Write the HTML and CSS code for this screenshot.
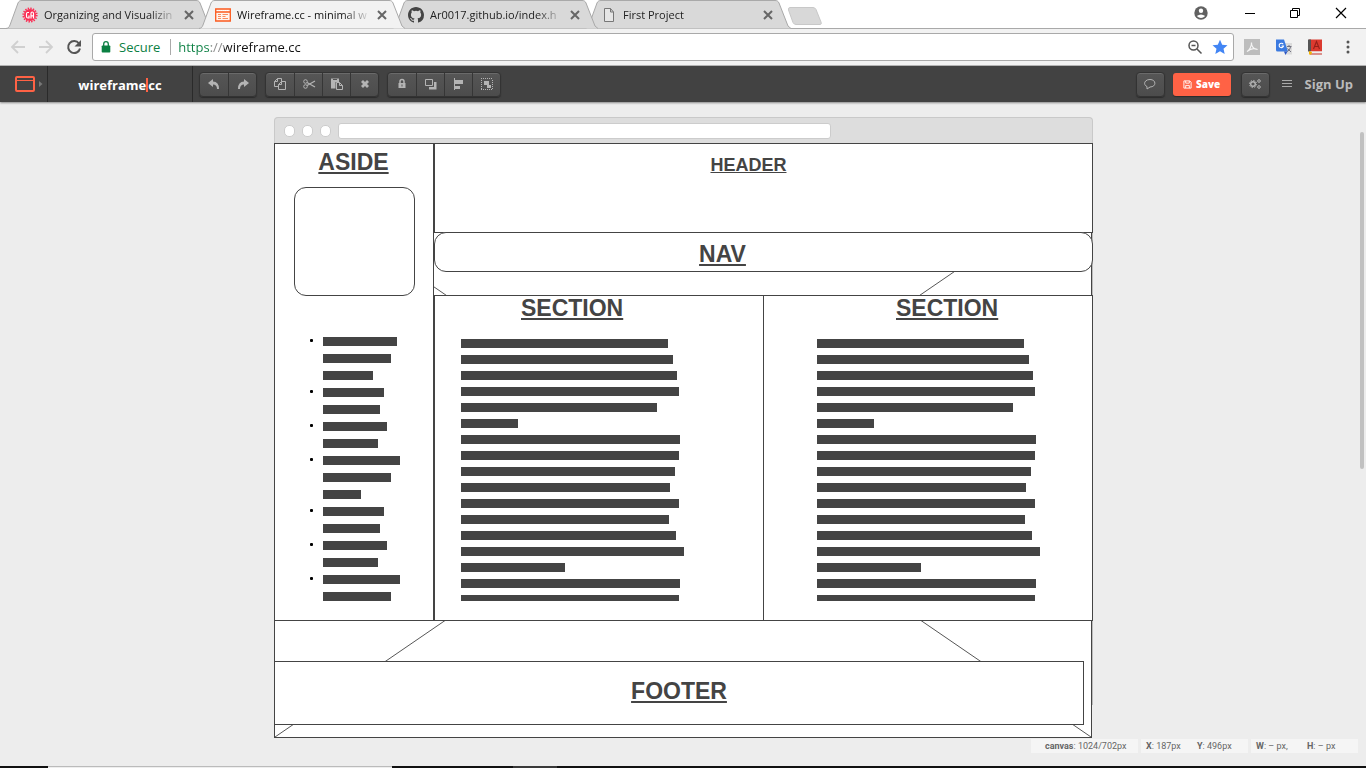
FILE: index.html
```html
<!DOCTYPE html>
<html lang="en">
<head>
<meta charset="utf-8">
<title>Wireframe.cc - minimal wireframing tool</title>
<link rel="stylesheet" href="styles.css">
</head>
<body>
<div class="tabstrip">
  <div class="tabs">
    <div class="tab">
      <svg class="tab-shape" viewBox="0 0 206 29" preserveAspectRatio="none"><path d="M0 28.5C3 28 3 27 4 25L12 3C13 1 14 .5 16 .5H190C192 .5 193 1 194 3L203 26L206 28.5"/></svg>
      <svg class="favicon" viewBox="0 0 16 16"><circle cx="8" cy="8" r="6" fill="#fb2e54"/><circle cx="8" cy="8" r="6.6" fill="none" stroke="#fb2e54" stroke-width="2" stroke-dasharray="1.4 1.2"/><path d="M7 5.500H5.500Q4.500 5.500 4.500 7v2.500Q4.500 11 6 11H7V8.500M9 11.500V6.500Q9 5 10.200 5t1.300 1.500v5M9 8.800h2.500" fill="none" stroke="#fff" stroke-width="1.200"/></svg>
      <span class="tab-title">Organizing and Visualizin</span>
      <button class="tab-close" aria-label="Close tab"><svg viewBox="0 0 10 10"><path d="M1 1l8 8M9 1L1 9"/></svg></button>
    </div>
    <div class="tab active">
      <svg class="tab-shape" viewBox="0 0 206 29" preserveAspectRatio="none"><path d="M0 28.5C3 28 3 27 4 25L12 3C13 1 14 .5 16 .5H190C192 .5 193 1 194 3L203 26L206 28.5"/></svg>
      <svg class="favicon" viewBox="0 0 16 16"><path d="M.7 2h14.600v12H.7zM.7 5h14.600" fill="#fff4ee" stroke="#fb5a1e" stroke-width="1.300"/><path d="M2 3.500h12" stroke="#fff" stroke-dasharray="1 1"/><path d="M3 7.500h3M7.500 7.500h5.500M3 9.500h3M7.500 9.500h3M3 11.500h3M7.500 11.500h5.500" stroke="#fb8a5a" stroke-width="1"/></svg>
      <span class="tab-title">Wireframe.cc - minimal w</span>
      <button class="tab-close" aria-label="Close tab"><svg viewBox="0 0 10 10"><path d="M1 1l8 8M9 1L1 9"/></svg></button>
    </div>
    <div class="tab">
      <svg class="tab-shape" viewBox="0 0 206 29" preserveAspectRatio="none"><path d="M0 28.5C3 28 3 27 4 25L12 3C13 1 14 .5 16 .5H190C192 .5 193 1 194 3L203 26L206 28.5"/></svg>
      <svg class="favicon" viewBox="0 0 16 16"><path fill="#444" d="M8 0C3.580 0 0 3.580 0 8c0 3.540 2.290 6.530 5.470 7.590.4.070.55-.17.55-.38 0-.19-.01-.82-.01-1.490-2.010.37-2.530-.49-2.690-.94-.09-.23-.48-.94-.82-1.130-.28-.15-.68-.52-.01-.53.63-.01 1.080.58 1.230.82.72 1.210 1.870.87 2.330.66.070-.52.28-.87.51-1.070-1.780-.2-3.640-.89-3.640-3.950 0-.87.31-1.590.82-2.150-.08-.2-.36-1.020.08-2.120 0 0 .67-.21 2.200.82a7.600 7.600 0 0 1 4 0c1.530-1.040 2.200-.82 2.200-.82.44 1.100.16 1.920.08 2.120.51.56.82 1.270.82 2.150 0 3.070-1.870 3.750-3.650 3.950.29.25.54.73.54 1.480 0 1.070-.01 1.930-.01 2.200 0 .21.15.46.55.38A8.010 8.010 0 0 0 16 8c0-4.420-3.580-8-8-8z"/></svg>
      <span class="tab-title">Ar0017.github.io/index.h</span>
      <button class="tab-close" aria-label="Close tab"><svg viewBox="0 0 10 10"><path d="M1 1l8 8M9 1L1 9"/></svg></button>
    </div>
    <div class="tab">
      <svg class="tab-shape" viewBox="0 0 206 29" preserveAspectRatio="none"><path d="M0 28.5C3 28 3 27 4 25L12 3C13 1 14 .5 16 .5H190C192 .5 193 1 194 3L203 26L206 28.5"/></svg>
      <svg class="favicon" viewBox="0 0 16 16"><path d="M3.500 1.500h6l3 3.500v9.500h-9zM9.500 1.500V5h3" fill="#e6e6e6" stroke="#777"/></svg>
      <span class="tab-title">First Project</span>
      <button class="tab-close" aria-label="Close tab"><svg viewBox="0 0 10 10"><path d="M1 1l8 8M9 1L1 9"/></svg></button>
    </div>
    <button class="new-tab" aria-label="New tab"><svg viewBox="0 0 36 18"><path d="M3 .5H26Q28 .5 29 2.500L34 15Q35 17.500 33 17.500H9Q7 17.500 6 15.500L1.500 3Q1 .5 3 .5Z" fill="#d8d8d8" stroke="#c8c8c8"/></svg></button>
  </div>
  <div class="window-buttons">
    <button aria-label="Account"><svg viewBox="0 0 14 14"><circle cx="7" cy="7" r="6.700" fill="#616161"/><circle cx="7" cy="4.800" r="2.200" fill="#fff"/><path d="M2.800 10Q7 6.800 11.200 10Q7 14 2.800 10Z" fill="#fff"/></svg></button>
    <button aria-label="Minimize"><svg viewBox="0 0 14 14"><path d="M3 7.500h10" stroke="#000"/></svg></button>
    <button aria-label="Restore"><svg viewBox="0 0 14 14"><path d="M2.500 4.500h7v7h-7zM4.500 4V2.500h7v7H10" fill="none" stroke="#000"/></svg></button>
    <button aria-label="Close"><svg viewBox="0 0 14 14"><path d="M2 2l10 10M12 2L2 12" stroke="#000" stroke-width="1.200"/></svg></button>
  </div>
</div>

<div class="toolbar">
  <div class="nav-buttons">
    <button aria-label="Back"><svg viewBox="0 0 16 16"><path d="M15 8H2M8 2L2 8l6 6" fill="none" stroke="#d0d0d0" stroke-width="1.800"/></svg></button>
    <button aria-label="Forward"><svg viewBox="0 0 16 16"><path d="M1 8h13M8 2l6 6-6 6" fill="none" stroke="#d0d0d0" stroke-width="1.800"/></svg></button>
    <button aria-label="Reload"><svg viewBox="0 0 16 16"><path d="M13 4.500A6 6 0 1 0 14 9.500" fill="none" stroke="#555" stroke-width="2"/><path d="M15 1v6.500H8.500z" fill="#555"/></svg></button>
  </div>
  <div class="omnibox">
    <svg class="lock" viewBox="0 0 10 14"><path d="M1.500 5.500h7q.8 0 .8.800v5.400q0 .8-.8.800h-7q-.8 0-.8-.8V6.300q0-.8.8-.8z" fill="#0b8043"/><path d="M2.700 6V4a2.300 2.300 0 0 1 4.600 0v2" fill="none" stroke="#0b8043" stroke-width="1.300"/></svg>
    <span class="secure">Secure</span>
    <input class="url" type="text" value="https://wireframe.cc" aria-label="Address">
    <svg class="omni-icon" viewBox="0 0 16 16"><circle cx="6.500" cy="6.500" r="4.500" fill="none" stroke="#555" stroke-width="1.500"/><path d="M4.500 6.500h4M10 10l4.500 4.500" stroke="#555" stroke-width="1.500"/></svg>
    <svg class="omni-icon" viewBox="0 0 16 16"><path fill="#4285f4" d="M8 .8l2.200 4.900 5.300.5-4 3.600 1.200 5.200L8 12.300 3.300 15l1.200-5.200-4-3.600 5.300-.5z"/></svg>
  </div>
  <div class="extensions">
    <button aria-label="PDF"><svg viewBox="0 0 16 16"><path d="M0 0h16v16H0z" fill="#bdbdbd"/><path d="M3 12.500C5 11.500 8 7 7.500 3.500C7 7 10 10.500 13.500 10.500C10 9 6 10 3 12.500Z" fill="none" stroke="#f5f5f5" stroke-width="1.200"/></svg></button>
    <button aria-label="Translate"><svg viewBox="0 0 16 16"><path d="M6 4h10v11.500H9z" fill="#dcdcdc"/><path d="M0 .5h8l4 12H1.500Q0 12.500 0 11z" fill="#3b7ae0"/><path d="M8 12.500h3.500L9.500 16z" fill="#2a56c6"/><path d="M7.200 5.200A2.200 2.200 0 1 0 7.500 7H5.500" fill="none" stroke="#fff" stroke-width="1.100"/><path d="M11 7.500h4.500M13 6v1.500M14.500 8Q14 11 11.500 12.500M11.500 9.500L15 13" fill="none" stroke="#667" stroke-width=".9"/></svg></button>
    <button aria-label="Dictionary"><svg viewBox="0 0 16 16"><path d="M1 .5h13v12H1z" fill="#db3a2f"/><path d="M0 .5h3v12H0z" fill="#555"/><path d="M2 12.500h12v2H2z" fill="#eee"/><path d="M2 15h12" stroke="#c33026"/><path d="M1 12l3 1-1 3-1-1-1 1z" fill="#f4b400"/><path d="M5.500 10l3-7.500 3 7.500M6.500 7.500h4" fill="none" stroke="#962019" stroke-width="1.100"/></svg></button>
    <button aria-label="Menu"><svg viewBox="0 0 16 16"><g fill="#555"><circle cx="8" cy="3" r="1.500"/><circle cx="8" cy="8" r="1.500"/><circle cx="8" cy="13" r="1.500"/></g></svg></button>
  </div>
</div>

<header class="appbar">
  <button class="device" aria-label="Canvas size">
    <svg class="device-icon" viewBox="0 0 20 16"><rect x="1" y="1" width="18" height="14" rx="1" fill="none" stroke="#ff6245" stroke-width="2"/><path d="M1 4.500h18" stroke="#ff6245"/></svg>
    <svg class="device-arrow" viewBox="0 0 4 6"><path d="M0 0l3.500 3L0 6z" fill="#777"/></svg>
  </button>
  <a class="brand" href="#">wireframe<span class="brand-bar"></span>cc</a>
  <div class="tools">
    <div class="group">
      <button aria-label="Undo"><svg viewBox="0 0 14 14"><path d="M1 6l5-4v2.500q6 0 6 7.500h-2q0-4.500-4-4.500V10z"/></svg></button>
      <button aria-label="Redo"><svg viewBox="0 0 14 14"><path d="M13 6L8 2v2.500q-6 0-6 7.500h2q0-4.500 4-4.500V10z"/></svg></button>
    </div>
    <div class="group">
      <button aria-label="Copy"><svg viewBox="0 0 14 14"><path class="line" d="M4.500 1.500h4v3M4.500 1.500l-3 3v5h4M4.500 1.500v3h-3M8.500 4.500h4v8h-7v-5zM8.500 4.500v3h-3"/></svg></button>
      <button aria-label="Cut"><svg viewBox="0 0 14 14"><circle class="line" cx="3.500" cy="4.500" r="1.800"/><circle class="line" cx="3.500" cy="9.500" r="1.800"/><path class="line" d="M5 5.500l8 4.500M5 8.500l8-4.500" stroke-width="1.300"/></svg></button>
      <button aria-label="Paste"><svg viewBox="0 0 14 14"><path d="M1 1.500h8V5H5.500v6.500H1z"/><path class="line" d="M6.500 5.500h3l3 3v4h-6zM9.500 5.500v3h3"/><path d="M3 2h4v1H3z" fill="#555"/></svg></button>
      <button aria-label="Delete"><svg viewBox="0 0 14 14"><path d="M3 5l2-2 2 2 2-2 2 2-2 2 2 2-2 2-2-2-2 2-2-2 2-2z"/></svg></button>
    </div>
    <div class="group">
      <button aria-label="Lock"><svg viewBox="0 0 14 14"><path d="M3.500 6h7v5h-7z"/><path class="line" d="M5 6V4.500a2 2 0 0 1 4 0V6" stroke-width="1.500"/><path d="M6.500 7.500h1v2h-1z" fill="#555"/></svg></button>
      <button aria-label="Arrange"><svg viewBox="0 0 14 14"><path class="line" d="M1.500 2.500h7v6h-7z"/><path d="M10 5h2.500v7.500H5V10h5z"/></svg></button>
      <button aria-label="Align"><svg viewBox="0 0 14 14"><path d="M2 1h1v12H2zM3 3h8v4H3zM3 9h5v3H3z"/></svg></button>
      <button aria-label="Group"><svg viewBox="0 0 14 14"><g shape-rendering="crispEdges"><path class="line" d="M1 1.500h12M1 12.500h12M1.500 3v9M12.500 3v9" stroke-dasharray="1 1"/></g><path d="M4 4h5v4H4zM7 8h4v3H7z"/></svg></button>
    </div>
  </div>
  <div class="actions">
    <button class="single" aria-label="Comments"><svg viewBox="0 0 14 14"><path class="line" d="M7 2.500c6.500 0 6.500 7.500 0 7.500L4 12V9.500C0 8 1 2.500 7 2.500z"/></svg></button>
    <button class="save"><svg viewBox="0 0 10 10"><path d="M1 1h6.500L9 2.500V9H1zM3 1v2.500h4V1M3 9V6h4v3" fill="none" stroke="#fff"/></svg>Save</button>
    <button class="single" aria-label="Settings"><svg viewBox="0 0 14 14"><circle class="line" cx="5" cy="7" r="2.300" stroke-width="1.400"/><circle class="line" cx="5" cy="7" r="3.600" stroke-dasharray="1.400 1.400"/><circle class="line" cx="11" cy="4" r="1.300"/><circle class="line" cx="11" cy="10" r="1.300"/></svg></button>
    <button class="menu" aria-label="Menu"><svg viewBox="0 0 10 10"><path d="M0 1.500h10M0 4.500h10M0 7.500h10" stroke="#aaa"/></svg></button>
    <a class="signup" href="#">Sign Up</a>
  </div>
</header>

<main class="workspace">
  <div class="canvas">
    <div class="frame-bar"><i class="dot"></i><i class="dot"></i><i class="dot"></i><div class="frame-url"></div></div>
    <div class="sheet">
      <div class="placeholder"><svg viewBox="0 0 818 561" preserveAspectRatio="none"><path d="M0 0L818 561M818 0L0 561"/></svg></div>
      <aside class="box aside">
        <h2>ASIDE</h2>
        <div class="avatar"></div>
        <ul class="bars">
          <li><i style="width:74px"></i><i style="width:68px"></i><i style="width:50px"></i></li>
          <li><i style="width:61px"></i><i style="width:57px"></i></li>
          <li><i style="width:64px"></i><i style="width:55px"></i></li>
          <li><i style="width:77px"></i><i style="width:68px"></i><i style="width:38px"></i></li>
          <li><i style="width:61px"></i><i style="width:57px"></i></li>
          <li><i style="width:64px"></i><i style="width:55px"></i></li>
          <li><i style="width:77px"></i><i style="width:68px"></i></li>
        </ul>
      </aside>
      <div class="box head"><h1>HEADER</h1></div>
      <nav class="box nav"><h2>NAV</h2></nav>
      <div class="sections">
        <section class="box first">
          <h2>SECTION</h2>
          <div class="copy"><i style="width:207px"></i><i style="width:212px"></i><i style="width:216px"></i><i style="width:218px"></i><i style="width:196px"></i><i style="width:57px"></i><i style="width:219px"></i><i style="width:218px"></i><i style="width:214px"></i><i style="width:209px"></i><i style="width:218px"></i><i style="width:208px"></i><i style="width:215px"></i><i style="width:223px"></i><i style="width:104px"></i><i style="width:219px"></i><i style="width:218px"></i></div>
        </section>
        <section class="box second">
          <h2>SECTION</h2>
          <div class="copy"><i style="width:207px"></i><i style="width:212px"></i><i style="width:216px"></i><i style="width:218px"></i><i style="width:196px"></i><i style="width:57px"></i><i style="width:219px"></i><i style="width:218px"></i><i style="width:214px"></i><i style="width:209px"></i><i style="width:218px"></i><i style="width:208px"></i><i style="width:215px"></i><i style="width:223px"></i><i style="width:104px"></i><i style="width:219px"></i><i style="width:218px"></i></div>
        </section>
      </div>
      <footer class="box foot"><h2>FOOTER</h2></footer>
    </div>
  </div>
  <div class="scroll-thumb"></div>
  <div class="status">
    <div class="status-box wide"><span><b>canvas</b>: 1024/702px</span></div>
    <div class="status-box"><span><b>X</b>: 187px</span><span><b>Y</b>: 496px</span></div>
    <div class="status-box"><span><b>W</b>: – px,</span><span><b>H</b>: – px</span></div>
  </div>
</main>
<div class="taskbar"><i class="task-search"></i><i class="task-active"></i></div>
</body>
</html>
```

FILE: styles.css
```css
* { box-sizing: border-box; }
body {
  margin: 0;
  min-height: 100vh;
  display: flex;
  flex-direction: column;
  background: #ededed;
  font-family: "Open Sans", "Noto Sans", sans-serif;
}
button { border: 0; padding: 0; margin: 0; background: none; font: inherit; display: flex; align-items: center; justify-content: center; }
svg { display: block; }
h1, h2 { margin: 0; font-weight: bold; }
a { text-decoration: none; }

/* Browser tabs */
.tabstrip { display: flex; justify-content: space-between; height: 29px; background: #fff; box-shadow: inset 0 -1px #a9a9a9; }
.tabs { display: flex; padding-left: 6px; }
.tab { position: relative; display: flex; align-items: center; width: 206px; height: 29px; padding: 1px 17px 0 16px; }
.tab + .tab { margin-left: -13px; }
.tab:nth-child(1) { z-index: 3; }
.tab:nth-child(3) { z-index: 2; }
.tab:nth-child(4) { z-index: 1; }
.tab.active { z-index: 4; }
.tab-shape { position: absolute; inset: 0; width: 100%; height: 100%; z-index: -1; }
.tab-shape path { fill: #d9d9d9; stroke: #a9a9a9; }
.active .tab-shape path { fill: #f2f2f2; }
.favicon { width: 16px; height: 16px; flex: none; }
.tab-title {
  flex: 1; margin-left: 6px; white-space: nowrap;
  font-size: 11px; line-height: 16px; color: #222;
  -webkit-mask-image: linear-gradient(90deg, #000 106px, transparent 134px);
  mask-image: linear-gradient(90deg, #000 106px, transparent 134px);
}
.active .tab-title { color: #111; }
.tab-close { width: 10px; height: 10px; margin: 0 1px 0 8px; }
.tab-close svg { width: 10px; height: 10px; stroke: #666; stroke-width: 2; }
.new-tab { width: 36px; margin: 4px 0 0 -4px; height: 24px; }
.new-tab svg { width: 36px; height: 18px; }
.window-buttons { display: flex; height: 26px; padding-right: 2px; }
.window-buttons button { width: 46px; }
.window-buttons button:first-child { width: 50px; }
.window-buttons svg { width: 14px; height: 14px; }

/* Address bar */
.toolbar { display: flex; align-items: center; height: 37px; padding: 0 10px 0 10px; background: #f2f2f2; border-bottom: 1px solid #b6b6b6; }
.nav-buttons { display: flex; gap: 12px; margin-right: 10px; }
.nav-buttons svg, .extensions svg { width: 16px; height: 16px; }
.omnibox { flex: 1; display: flex; align-items: center; height: 28px; padding: 0 5px 0 8px; background: #fff; border: 1px solid #a9a9a9; border-radius: 3px; }
.lock { width: 10px; height: 14px; }
.secure { margin-left: 8px; padding-right: 10px; border-right: 1px solid #aaa; font-size: 13px; line-height: 16px; color: #0b8043; }
.url {
  flex: 1; min-width: 0; border: 0; padding: 0; margin-left: 7px; outline: 0;
  font: 13px/20px "Open Sans", "Noto Sans", sans-serif;
  color: transparent;
  background: linear-gradient(90deg, #0b8043 33px, #888 33px, #888 46px, #111 46px);
  -webkit-background-clip: text; background-clip: text;
}
.omni-icon { width: 16px; height: 16px; margin-left: 9px; }
.extensions { display: flex; gap: 16px; margin-left: 10px; }

/* Application bar */
.appbar { position: relative; display: flex; height: 36px; background: #424242; box-shadow: 0 1px 2px #888; }
.device { width: 48px; padding-left: 15px; justify-content: flex-start; gap: 4px; border-right: 1px solid #2a2a2a; }
.device-icon { width: 20px; height: 16px; }
.device-arrow { width: 4px; height: 6px; }
.brand { width: 145px; padding-top: 2px; display: flex; align-items: center; justify-content: center; border-right: 1px solid #2a2a2a; color: #fff; font-size: 13px; font-weight: 700; }
.brand-bar { width: 2px; height: 14px; background: #ff6245; }
.tools { flex: 1; display: flex; align-items: center; gap: 8px; padding-left: 6px; }
.group, .single { display: flex; background: linear-gradient(#565656, #4c4c4c); border: 1px solid #333; border-radius: 4px; box-shadow: inset 0 1px #6a6a6a, 0 1px 1px #2c2c2c; }
.group button { width: 28px; height: 23px; }
.group button + button { border-left: 1px solid #363636; }
.group svg, .single svg { width: 14px; height: 14px; flex: none; fill: #b4b4b4; }
.line { fill: none; stroke: #b4b4b4; }
.actions { display: flex; align-items: center; padding-right: 13px; }
.single { width: 29px; height: 25px; }
.save { width: 58px; height: 23px; margin: 0 10px 0 8px; gap: 4px; border-radius: 3px; background: #ff6245; box-shadow: 0 1px 1px #2c2c2c; color: #fff; font-size: 10px; font-weight: 800; }
.save svg { width: 9px; height: 9px; }
.menu { margin: 0 13px 0 12px; }
.menu svg { width: 10px; height: 10px; }
.signup { color: #bbb; font-size: 13px; font-weight: bold; }

/* Drawing area */
.workspace { position: relative; flex: 1; padding: 15px 0 28px 1px; }
.canvas { width: 100%; max-width: 819px; margin: 0 auto; }
.frame-bar { display: flex; align-items: center; height: 26px; padding-left: 9px; gap: 7px; background: #ddd; border: 1px solid #c9c9c9; border-bottom: 0; border-radius: 4px 4px 0 0; }
.dot { width: 11px; height: 12px; background: #fff; border: 1px solid #ccc; border-radius: 5px; }
.frame-url { width: 61%; height: 16px; background: #fff; border: 1px solid #ccc; border-radius: 3px; }
.sheet {
  display: grid;
  grid-template-columns: 160px 1fr;
  grid-template-rows: 89px 40px 23px auto 40px 64px 13px;
  background: linear-gradient(#bbb, #bbb) right top / 1px 562px no-repeat;
  font-family: "Liberation Sans", Arial, sans-serif;
  color: #444;
}
.box { background: #fff; border: 1px solid #444; }
.sheet h1, .sheet h2 { font-size: 23px; line-height: 24px; text-align: center; text-decoration: underline; }
.sheet h1 { font-size: 18px; }
.placeholder { grid-area: 1 / 1 / -1 / -1; display: flex; margin: 34px 1px 0 0; background: #fff; border: 1px solid #444; }
.placeholder svg { width: 100%; height: 0; min-height: 100%; fill: none; stroke: #555; }
.aside { grid-area: 1 / 1 / 5 / 2; padding: 6px 18px 0 19px; }
.aside h2 { margin-right: 2px; }
.avatar { height: 109px; margin-top: 13px; border: 1px solid #444; border-radius: 12px; }
.bars, .bars li { display: flex; flex-direction: column; gap: 8px; }
.bars { margin: 41px 0 0; padding-left: 29px; list-style: none; }
.bars li { position: relative; }
.bars li::before { content: ""; position: absolute; left: -13px; top: 2px; width: 3px; height: 3px; border-radius: 1px; background: #000; }
.bars i, .copy i { display: block; flex: none; height: 9px; background: #444; }
.head { grid-area: 1 / 2; margin-bottom: -1px; padding: 9px 30px 0 0; }
.nav { grid-area: 2 / 2; padding: 9px 82px 0 0; border-radius: 12px; }
.sections { grid-area: 4 / 2; display: grid; grid-template-columns: 330fr 329fr; }
.sections .box { padding-bottom: 19px; }
.sections h2 { text-align: left; }
.copy { display: flex; flex-direction: column; gap: 7px; max-height: 262px; margin-top: 19px; overflow: hidden; }
.first h2 { padding-left: 86px; }
.first .copy { padding-left: 26px; }
.second { margin-left: -1px; }
.second h2 { padding-left: 132px; }
.second .copy { padding-left: 53px; }
.foot { grid-area: 6 / 1 / 7 / 3; margin-right: 9px; padding-top: 17px; }

/* Overlays and system bar */
.scroll-thumb { position: absolute; right: 2px; top: 30px; width: 4px; height: 337px; border-radius: 2px; background: #c1c1c1; }
.status { position: absolute; right: 8px; bottom: 13px; display: flex; gap: 3px; }
.status-box { display: flex; width: 107px; height: 14px; padding-left: 5px; background: #f5f5f5; color: #666; font-family: Roboto, "Open Sans", sans-serif; font-size: 9px; line-height: 14px; }
.status-box span { flex: 1; white-space: nowrap; }
.status-box.wide { padding-left: 14px; }
.taskbar { display: flex; flex: none; height: 2px; padding-left: 48px; background: #111; }
.task-search { width: 344px; background: #eee; border-top: 1px solid #bbb; }
.task-active { width: 44px; margin-left: 121px; background: #3a3a3a; }
```
